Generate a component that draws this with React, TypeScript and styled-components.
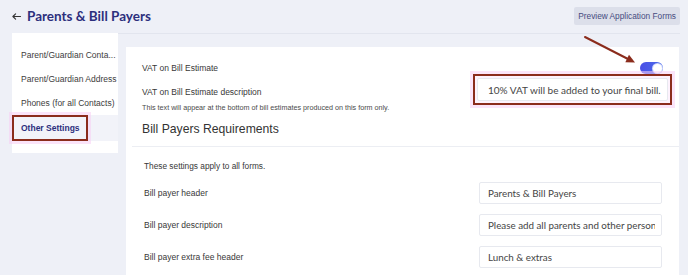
import React from 'react';
import styled, { createGlobalStyle } from 'styled-components';

const GlobalStyle = createGlobalStyle`
  html, body {
    margin: 0;
    padding: 0;
    background: #eef0f7;
  }
  body {
    font-family: 'Liberation Sans', Arial, sans-serif;
    color: #363636;
  }
`;

const navy = '#2c2f7d';
const redLine = '#8b2c1c';
const halo = '0 0 0 3px rgba(248, 205, 244, 0.55)';

const sideItems = [
  'Parent/Guardian Conta...',
  'Parent/Guardian Address',
  'Phones (for all Contacts)',
];

const billFields = [
  { label: 'Bill payer header', value: 'Parents & Bill Payers' },
  {
    label: 'Bill payer description',
    value: 'Please add all parents and other persons who will be paying',
  },
  { label: 'Bill payer extra fee header', value: 'Lunch & extras' },
];

const App: React.FC = () => {
  return (
    <Page>
      <GlobalStyle />
      <Header>
        <Title>
          <svg width="9" height="7" viewBox="0 0 9 7" fill="none">
            <path
              d="M8.5 3.5H1M3.6 0.8L0.9 3.5L3.6 6.2"
              stroke="#333"
              strokeWidth="1.1"
              strokeLinecap="round"
              strokeLinejoin="round"
            />
          </svg>
          Parents &amp; Bill Payers
        </Title>
        <PreviewButton>Preview Application Forms</PreviewButton>
      </Header>

      <Body>
        <Sidebar>
          {sideItems.map((item) => (
            <SideItem key={item}>{item}</SideItem>
          ))}
          <SideItem $active>
            <SideHighlight>Other Settings</SideHighlight>
          </SideItem>
        </Sidebar>

        <Card>
          <ToggleRow>
            <Label>VAT on Bill Estimate</Label>
            <Toggle>
              <Knob />
            </Toggle>
          </ToggleRow>

          <DescRow>
            <DescText>
              <Label>VAT on Bill Estimate description</Label>
              <Help>
                This text will appear at the bottom of bill estimates produced
                on this form only.
              </Help>
            </DescText>
            <FieldHighlight>
              <VatInput readOnly value="10% VAT will be added to your final bill." />
            </FieldHighlight>
          </DescRow>

          <SectionTitle>Bill Payers Requirements</SectionTitle>

          <Section>
            <Note>These settings apply to all forms.</Note>
            {billFields.map((f) => (
              <FieldRow key={f.label}>
                <Label>{f.label}</Label>
                <Field readOnly value={f.value} />
              </FieldRow>
            ))}
          </Section>
        </Card>
      </Body>

      <Arrow width="688" height="275" viewBox="0 0 688 275">
        <line
          x1="585"
          y1="37"
          x2="629"
          y2="59.5"
          stroke={redLine}
          strokeWidth="2"
          strokeLinecap="round"
        />
        <polygon points="635,62.5 625.3,62.2 629,54.8" fill={redLine} />
      </Arrow>
    </Page>
  );
};

const Page = styled.div`
  position: relative;
  width: 688px;
  height: 275px;
  overflow: hidden;
`;

const Header = styled.header`
  height: 34px;
  box-sizing: border-box;
  margin: 0 8px 0 12px;
  padding-bottom: 1px;
  display: flex;
  align-items: center;
  justify-content: space-between;
  border-bottom: 1px solid #e2e5ee;
`;

const Title = styled.h1`
  margin: 0;
  display: flex;
  align-items: center;
  gap: 6px;
  font-family: 'Lato', 'Liberation Sans', sans-serif;
  font-weight: 700;
  font-size: 13.5px;
  color: ${navy};
`;

const PreviewButton = styled.button`
  height: 18px;
  padding: 0 4px;
  border: none;
  border-radius: 2px;
  background: #dcdfea;
  color: #464b7f;
  font-family: 'Liberation Sans', Arial, sans-serif;
  font-size: 8.3px;
`;

const Body = styled.div`
  display: flex;
  align-items: flex-start;
  gap: 8px;
  padding-left: 12px;
`;

const Sidebar = styled.nav`
  width: 106px;
  margin-top: -1px;
  padding: 10px 0 12px;
  background: #fff;
  display: flex;
  flex-direction: column;
`;

const SideItem = styled.div<{ $active?: boolean }>`
  height: ${(p) => (p.$active ? '26px' : '24px')};
  display: flex;
  align-items: center;
  padding-left: ${(p) => (p.$active ? '0' : '9px')};
  background: ${(p) => (p.$active ? '#f2f3f9' : 'transparent')};
  font-size: 8.5px;
  white-space: nowrap;
  color: #3c3c3c;
`;

const SideHighlight = styled.span`
  height: 100%;
  box-sizing: border-box;
  width: 76px;
  display: flex;
  align-items: center;
  padding-left: 7px;
  border: 2px solid ${redLine};
  box-shadow: ${halo};
  font-weight: 700;
  color: ${navy};
`;

const Card = styled.section`
  width: 553px;
  height: 240px;
  margin-top: 13px;
  padding-top: 15px;
  box-sizing: border-box;
  background: #fff;
`;

const ToggleRow = styled.div`
  height: 12px;
  display: flex;
  align-items: center;
  justify-content: space-between;
  padding: 0 16px;
`;

const Label = styled.div`
  font-size: 8.5px;
  line-height: 12px;
  color: #383838;
  white-space: nowrap;
`;

const Toggle = styled.div`
  width: 23px;
  height: 12px;
  border-radius: 6px;
  background: linear-gradient(90deg, #4a4fe6, #4b6ce9);
  display: flex;
  align-items: center;
  justify-content: flex-end;
  padding: 0 1.5px;
  box-sizing: border-box;
`;

const Knob = styled.span`
  width: 9px;
  height: 9px;
  border-radius: 50%;
  background: #fff;
  box-shadow: 0 0 0 1px #c9d3fb;
`;

const DescRow = styled.div`
  display: flex;
  justify-content: space-between;
  align-items: flex-start;
  padding: 0 7px 0 16px;
`;

const DescText = styled.div`
  padding-top: 12px;
  display: flex;
  flex-direction: column;
  gap: 5px;
`;

const Help = styled.div`
  font-size: 7.2px;
  line-height: 9px;
  color: #4a4a4a;
  white-space: nowrap;
`;

const FieldHighlight = styled.div`
  width: 199px;
  height: 31px;
  box-sizing: border-box;
  padding: 2px;
  border: 2px solid ${redLine};
  box-shadow: ${halo};
  background: #fdf2fd;
  display: flex;
`;

const Field = styled.input`
  width: 183px;
  height: 22px;
  box-sizing: border-box;
  padding: 0 6px 0 8px;
  border: 1px solid #e7e9ef;
  border-radius: 2px;
  background: #fff;
  font-family: 'Lato', 'Liberation Sans', sans-serif;
  font-size: 9.8px;
  color: #454545;
  outline: none;
`;

const VatInput = styled(Field)`
  width: 100%;
  height: 100%;
  padding: 0 2px 0 10px;
  font-size: 10px;
`;

const SectionTitle = styled.h2`
  margin: 9px 0 0;
  padding-left: 16px;
  font-weight: 400;
  font-size: 12.2px;
  line-height: 16px;
  color: #333;
`;

const Section = styled.div`
  margin: 9px 0 0 6px;
  padding: 13px 17px 0 12px;
  border-top: 1px solid #eceef3;
  display: flex;
  flex-direction: column;
  gap: 10px;
`;

const Note = styled(Label)`
  font-size: 8.3px;
`;

const FieldRow = styled.div`
  display: flex;
  align-items: center;
  justify-content: space-between;
`;

const Arrow = styled.svg`
  position: absolute;
  left: 0;
  top: 0;
  pointer-events: none;
`;

export default App;
